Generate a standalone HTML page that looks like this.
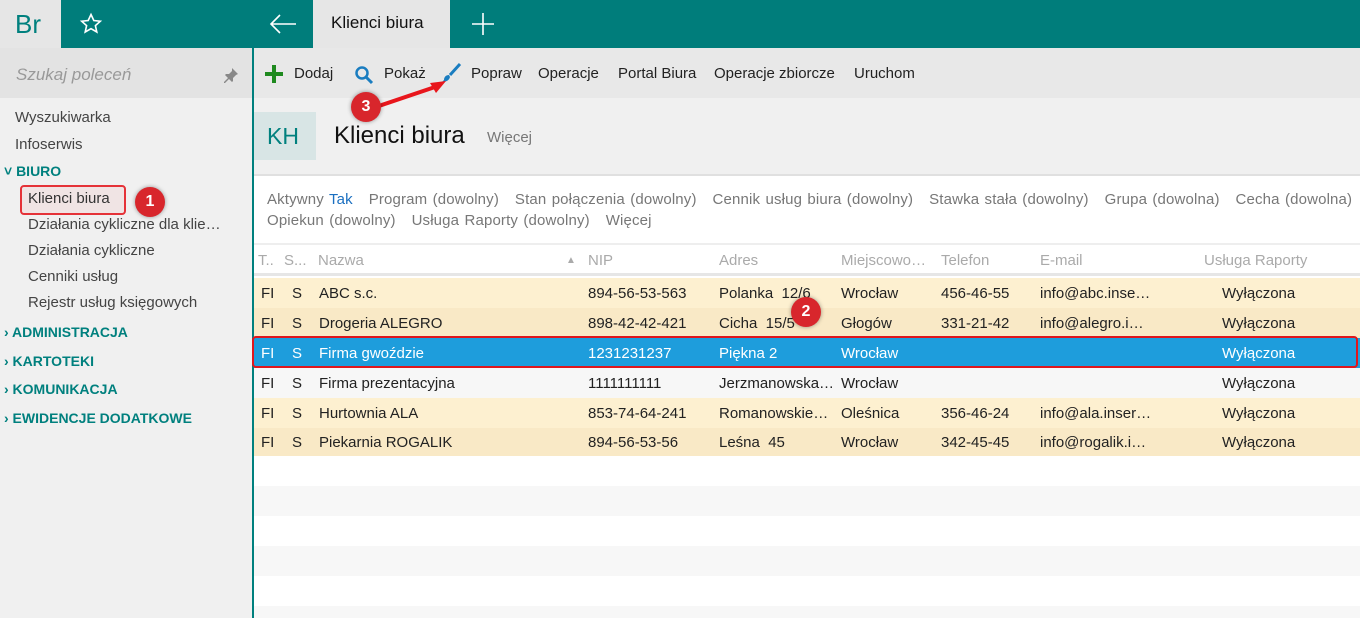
<!DOCTYPE html>
<html><head><meta charset="utf-8"><style>
*{margin:0;padding:0;box-sizing:border-box}
html,body{width:1360px;height:618px;overflow:hidden}
body{font-family:"Liberation Sans",sans-serif;background:#fff;position:relative;color:#222}
.a{position:absolute;white-space:nowrap}
.t{font-size:15px}
.row{position:absolute;left:254px;width:1106px;height:30px}
.row span{position:absolute;top:7px;font-size:15px;white-space:nowrap}
.badge{position:absolute;width:30px;height:30px;border-radius:50%;background:#d8262c;color:#fff;font-weight:bold;font-size:16px;text-align:center;line-height:30px;box-shadow:0 0 4px rgba(0,0,0,.4);z-index:5}
</style></head><body>
<!-- top bar -->
<div class="a" style="left:0;top:0;width:1360px;height:48px;background:#007d7b"></div>
<div class="a" style="left:0;top:0;width:61px;height:48px;background:#e6e6e6"></div>
<div class="a" style="left:15px;top:9px;font-size:26px;color:#00807e">Br</div>
<svg class="a" style="left:79px;top:12px" width="24" height="24" viewBox="0 0 24 24"><path d="M12 2.5l2.8 6 6.5.7-4.9 4.4 1.4 6.4L12 16.7 6.2 20l1.4-6.4L2.7 9.2l6.5-.7z" fill="none" stroke="#fff" stroke-width="1.6"/></svg>
<svg class="a" style="left:268px;top:12px" width="30" height="24" viewBox="0 0 30 24"><path d="M28 12H3M12 3l-9 9 9 9" fill="none" stroke="#fff" stroke-width="1.6"/></svg>
<div class="a" style="left:313px;top:0;width:137px;height:48px;background:#e6e6e6"></div>
<div class="a" style="left:331px;top:13px;font-size:17px;color:#111">Klienci biura</div>
<svg class="a" style="left:472px;top:13px" width="22" height="22"><path d="M11 0v22M0 11h22" stroke="#fff" stroke-width="1.6"/></svg>
<!-- sidebar -->
<div class="a" style="left:0;top:48px;width:252px;height:570px;background:#f0f0f0"></div>
<div class="a" style="left:0;top:48px;width:252px;height:50px;background:#e3e3e3"></div>
<div class="a" style="left:16px;top:65px;font-size:17px;color:#999;font-style:italic">Szukaj poleceń</div>
<svg class="a" style="left:223px;top:67px" width="16" height="16"><path d="M9 1l6 6-2 1-3 3 0 3-1 1-3-3-4 4-1 0 0-1 4-4-3-3 1-1 3 0 3-3z" fill="#888"/></svg>
<div class="a t" style="left:15px;top:109px;color:#444">Wyszukiwarka</div>
<div class="a t" style="left:15px;top:136px;color:#444">Infoserwis</div>
<div class="a" style="left:4px;top:163px;font-size:14px;color:#00807e;font-weight:bold">˅ BIURO</div>
<div class="a" style="left:20px;top:185px;width:106px;height:30px;border:2px solid #e53238;border-radius:4px;background:#f0e4e4"></div>
<div class="a t" style="left:28px;top:190px;color:#333">Klienci biura</div>
<div class="badge" style="left:135px;top:187px">1</div>
<div class="a t" style="left:28px;top:216px;color:#444">Działania cykliczne dla klie…</div>
<div class="a t" style="left:28px;top:242px;color:#444">Działania cykliczne</div>
<div class="a t" style="left:28px;top:268px;color:#444">Cenniki usług</div>
<div class="a t" style="left:28px;top:294px;color:#444">Rejestr usług księgowych</div>
<div class="a" style="left:4px;top:324px;font-size:14px;color:#00807e;font-weight:bold">› ADMINISTRACJA</div>
<div class="a" style="left:4px;top:353px;font-size:14px;color:#00807e;font-weight:bold">› KARTOTEKI</div>
<div class="a" style="left:4px;top:381px;font-size:14px;color:#00807e;font-weight:bold">› KOMUNIKACJA</div>
<div class="a" style="left:4px;top:410px;font-size:14px;color:#00807e;font-weight:bold">› EWIDENCJE DODATKOWE</div>
<div class="a" style="left:252px;top:48px;width:2px;height:570px;background:#00807e"></div>
<!-- toolbar -->
<div class="a" style="left:254px;top:48px;width:1106px;height:50px;background:#e8e8e8"></div>
<svg class="a" style="left:265px;top:65px" width="18" height="18"><path d="M9 0v18M0 9h18" stroke="#1f8a1f" stroke-width="4"/></svg>
<div class="a t" style="left:294px;top:65px">Dodaj</div>
<svg class="a" style="left:354px;top:65px" width="20" height="20"><circle cx="8" cy="8" r="5.5" fill="none" stroke="#1a7dc0" stroke-width="2.5"/><path d="M12 12l6 6" stroke="#1a7dc0" stroke-width="3"/></svg>
<div class="a t" style="left:384px;top:65px">Pokaż</div>
<svg class="a" style="left:440px;top:62px" width="22" height="22"><path d="M20 2L10 13" stroke="#1a7dc0" stroke-width="3"/><path d="M9 13c-3 0-5 2-5 5l-2 2c3 0 7-1 8-5z" fill="#1a7dc0"/></svg>
<div class="a t" style="left:471px;top:65px">Popraw</div>
<div class="a t" style="left:538px;top:65px">Operacje</div>
<div class="a t" style="left:618px;top:65px">Portal Biura</div>
<div class="a t" style="left:714px;top:65px">Operacje zbiorcze</div>
<div class="a t" style="left:854px;top:65px">Uruchom</div>
<!-- header -->
<div class="a" style="left:254px;top:98px;width:1106px;height:76px;background:#f0f0f0"></div>
<div class="a" style="left:254px;top:112px;width:62px;height:48px;background:#d8e5e5"></div>
<div class="a" style="left:267px;top:123px;font-size:23px;color:#00807e">KH</div>
<div class="a" style="left:334px;top:122px;font-size:24px;color:#111">Klienci biura</div>
<div class="a t" style="left:487px;top:129px;color:#777">Więcej</div>
<svg class="a" style="left:360px;top:75px;z-index:4" width="90" height="40"><path d="M10 34L78 11" stroke="#e8161c" stroke-width="4"/><path d="M86 6L70 8l6 10z" fill="#e8161c"/></svg>
<div class="badge" style="left:351px;top:92px">3</div>
<div class="a" style="left:254px;top:174px;width:1106px;height:2px;background:#e0e0e0"></div>
<div class="a t" style="left:267px;top:191px;color:#777;word-spacing:1px;letter-spacing:0.15px">Aktywny <span style="color:#1a6fc0">Tak</span> &nbsp; Program (dowolny) &nbsp; Stan połączenia (dowolny) &nbsp; Cennik usług biura (dowolny) &nbsp; Stawka stała (dowolny) &nbsp; Grupa (dowolna) &nbsp; Cecha (dowolna)</div>
<div class="a t" style="left:267px;top:212px;color:#777;word-spacing:1px;letter-spacing:0.15px">Opiekun (dowolny) &nbsp; Usługa Raporty (dowolny) &nbsp; Więcej</div>
<!-- grid header -->
<div class="a" style="left:254px;top:243px;width:1106px;height:2px;background:#eee"></div>
<div class="row" style="top:245px;height:31px;border-bottom:3px solid #e6e6e6;color:#aaa">
<span style="left:4px;color:#aaa">T..</span><span style="left:30px;color:#aaa">S...</span><span style="left:64px;color:#aaa">Nazwa</span><span style="left:312px;color:#aaa;font-size:10px;top:10px">▲</span><span style="left:334px;color:#aaa">NIP</span><span style="left:465px;color:#aaa">Adres</span><span style="left:587px;color:#aaa">Miejscowo…</span><span style="left:687px;color:#aaa">Telefon</span><span style="left:786px;color:#aaa">E-mail</span><span style="left:950px;color:#aaa">Usługa Raporty</span></div>
<!-- rows -->
<div class="row" style="top:278px;background:#fdf0d0"><span style="left:7px">FI</span><span style="left:38px">S</span><span style="left:65px">ABC s.c.</span><span style="left:334px">894-56-53-563</span><span style="left:465px">Polanka&nbsp; 12/6</span><span style="left:587px">Wrocław</span><span style="left:687px">456-46-55</span><span style="left:786px">info@abc.inse…</span><span style="left:968px">Wyłączona</span></div>
<div class="row" style="top:308px;background:#f9e9c6"><span style="left:7px">FI</span><span style="left:38px">S</span><span style="left:65px">Drogeria ALEGRO</span><span style="left:334px">898-42-42-421</span><span style="left:465px">Cicha&nbsp; 15/5</span><span style="left:587px">Głogów</span><span style="left:687px">331-21-42</span><span style="left:786px">info@alegro.i…</span><span style="left:968px">Wyłączona</span></div>
<div class="row" style="top:338px;background:#1e9ddc;color:#fff"><span style="left:7px">FI</span><span style="left:38px">S</span><span style="left:65px">Firma gwoździe</span><span style="left:334px">1231231237</span><span style="left:465px">Piękna 2</span><span style="left:587px">Wrocław</span><span style="left:968px">Wyłączona</span></div>
<div class="a" style="left:252px;top:336px;width:1106px;height:32px;border:2px solid #e0161c;border-radius:4px"></div>
<div class="row" style="top:368px;background:#f7f7f7"><span style="left:7px">FI</span><span style="left:38px">S</span><span style="left:65px">Firma prezentacyjna</span><span style="left:334px">1111111111</span><span style="left:465px">Jerzmanowska…</span><span style="left:587px">Wrocław</span><span style="left:968px">Wyłączona</span></div>
<div class="row" style="top:398px;background:#fdf0d0"><span style="left:7px">FI</span><span style="left:38px">S</span><span style="left:65px">Hurtownia ALA</span><span style="left:334px">853-74-64-241</span><span style="left:465px">Romanowskie…</span><span style="left:587px">Oleśnica</span><span style="left:687px">356-46-24</span><span style="left:786px">info@ala.inser…</span><span style="left:968px">Wyłączona</span></div>
<div class="row" style="top:428px;height:28px;background:#f9e9c6"><span style="left:7px;top:6px">FI</span><span style="left:38px;top:6px">S</span><span style="left:65px;top:6px">Piekarnia ROGALIK</span><span style="left:334px;top:6px">894-56-53-56</span><span style="left:465px;top:6px">Leśna&nbsp; 45</span><span style="left:587px;top:6px">Wrocław</span><span style="left:687px;top:6px">342-45-45</span><span style="left:786px;top:6px">info@rogalik.i…</span><span style="left:968px;top:6px">Wyłączona</span></div>
<div class="row" style="top:486px;background:#f7f7f7"></div>
<div class="row" style="top:546px;background:#f7f7f7"></div>
<div class="row" style="top:606px;height:12px;background:#f7f7f7"></div>
<div class="badge" style="left:791px;top:297px">2</div>
</body></html>
